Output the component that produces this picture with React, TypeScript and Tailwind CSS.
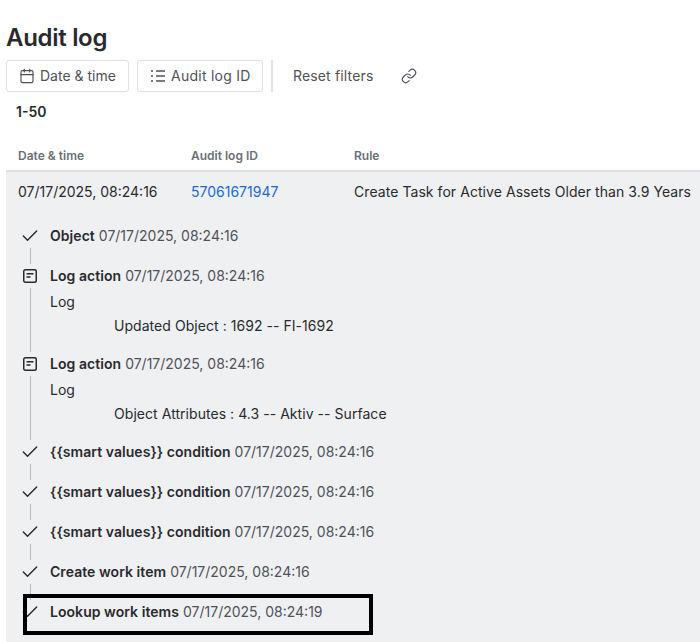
import React from 'react';
import { Calendar, Link, Check } from 'lucide-react';

type Step = {
  title: string;
  time: string;
  kind: 'check' | 'log';
  body?: string;
};

const steps: Step[] = [
  { title: 'Object', time: '07/17/2025, 08:24:16', kind: 'check' },
  { title: 'Log action', time: '07/17/2025, 08:24:16', kind: 'log', body: 'Updated Object : 1692 -- FI-1692' },
  { title: 'Log action', time: '07/17/2025, 08:24:16', kind: 'log', body: 'Object Attributes : 4.3 -- Aktiv -- Surface' },
  { title: '{{smart values}} condition', time: '07/17/2025, 08:24:16', kind: 'check' },
  { title: '{{smart values}} condition', time: '07/17/2025, 08:24:16', kind: 'check' },
  { title: '{{smart values}} condition', time: '07/17/2025, 08:24:16', kind: 'check' },
  { title: 'Create work item', time: '07/17/2025, 08:24:16', kind: 'check' },
  { title: 'Lookup work items', time: '07/17/2025, 08:24:19', kind: 'check' },
];

const LogIcon = () => (
  <svg width="16" height="16" viewBox="0 0 16 16" fill="none" stroke="#292a2e" strokeWidth="1.5">
    <rect x="1.75" y="1.75" width="12.5" height="12.5" rx="1.5" />
    <path d="M4.5 5.75h7M4.5 9h4" />
  </svg>
);

const ListIcon = () => (
  <svg width="16" height="16" viewBox="0 0 16 16" fill="none" stroke="#505258" strokeWidth="1.5">
    <path d="M6 3h9M6 8h9M6 13h9" />
    <path d="M1 3h2M1 8h2M1 13h2" />
  </svg>
);

export default function App() {
  return (
    <div className="relative h-[642px] w-[700px] overflow-hidden bg-white font-['Inter','Noto_Sans',sans-serif] text-[#292a2e]">
      {/* Header */}
      <div className="pl-1.5 pt-[22px]">
        <h1 className="h-[38px] text-2xl leading-[32px] font-semibold tracking-[-0.3px]">Audit log</h1>
        <div className="flex h-8 items-center">
          <button className="flex h-8 w-[123px] items-center gap-[5px] rounded-[3px] border border-[#dcdfe4] pl-3 text-sm text-[#505258]">
            <Calendar size={16} strokeWidth={1.75} />
            Date &amp; time
          </button>
          <button className="ml-2 flex h-8 w-[126px] items-center gap-[5px] rounded-[3px] border border-[#dcdfe4] pl-3 text-sm tracking-[0.25px] text-[#505258]">
            <ListIcon />
            Audit log ID
          </button>
          <div className="mx-2 h-8 w-0.5 bg-[#dcdfe4]" />
          <span className="ml-3 text-sm tracking-[0.15px] text-[#505258]">Reset filters</span>
          <Link size={16} strokeWidth={1.75} className="ml-7 text-[#505258]" />
        </div>
        <div className="pl-2.5 pt-3 text-sm leading-4 font-semibold">1-50</div>
      </div>

      {/* Table head */}
      <div className="ml-1.5 mt-7 flex h-6 items-start border-b-2 border-[#dcdfe4] pl-3 text-xs leading-4 font-semibold text-[#6b6e76]">
        <span className="w-[173px]">Date &amp; time</span>
        <span className="w-[163px]">Audit log ID</span>
        <span>Rule</span>
      </div>

      {/* Expanded row */}
      <div className="ml-1.5 h-[470px] bg-[#eff0f2]">
        <div className="flex h-[52px] items-start pl-3 pt-3 text-sm leading-4">
          <span className="w-[173px]">07/17/2025, 08:24:16</span>
          <span className="w-[163px] text-[#1868db]">57061671947</span>
          <span className="whitespace-nowrap tracking-[0.06px]">Create Task for Active Assets Older than 3.9 Years</span>
        </div>
        <div className="pl-3.5">
          {steps.map((step, i) => (
            <div key={i} className="flex gap-2.5">
              <div className="flex w-5 flex-col items-center">
                <div className="flex h-6 w-5 items-center justify-center">
                  {step.kind === 'log' ? <LogIcon /> : <Check size={20} strokeWidth={1.75} />}
                </div>
                {i < steps.length - 1 && <div className="w-px flex-1 bg-[#b7b9be]" />}
              </div>
              <div className={`text-sm ${step.body ? 'pb-3.5' : i < steps.length - 1 ? 'pb-4' : ''}`}>
                <div className="flex h-6 items-center gap-1 whitespace-nowrap">
                  <span className="font-semibold tracking-[0.05px]">{step.title}</span>
                  <span className="text-[#505258]">{step.time}</span>
                </div>
                {step.body && (
                  <div className="pt-0.5 leading-6">
                    <div>Log</div>
                    <div className="pl-16 whitespace-pre tracking-[0.05px]">{step.body}</div>
                  </div>
                )}
              </div>
            </div>
          ))}
        </div>
      </div>

      {/* Annotation */}
      <div className="absolute left-[23px] top-[594px] h-[41px] w-[350px] border-4 border-black" />
    </div>
  );
}
